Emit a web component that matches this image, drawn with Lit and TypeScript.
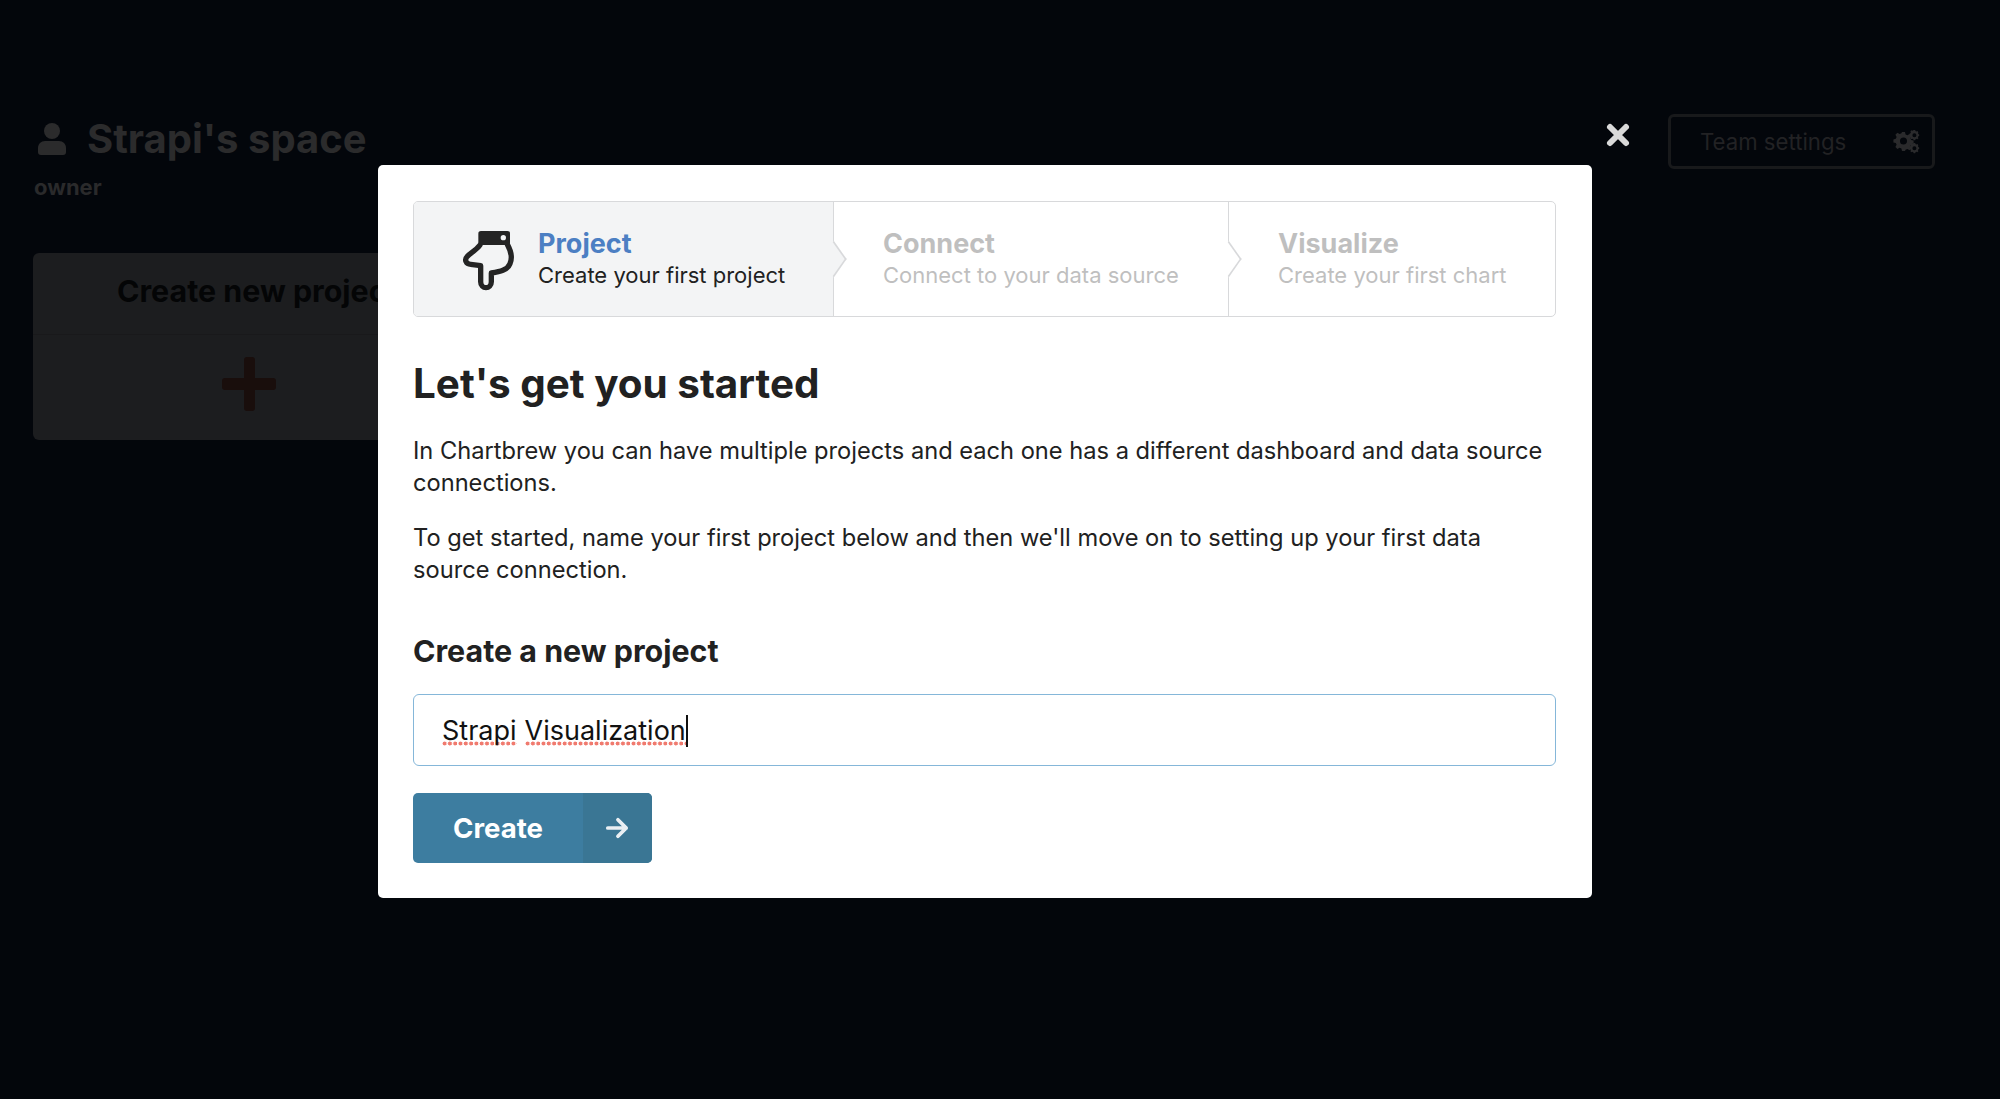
import { LitElement, html, css } from 'lit';
import { customElement } from 'lit/decorators.js';

@customElement('app-root')
export class AppRoot extends LitElement {
  static styles = css`
    :host {
      display: block;
      position: relative;
      height: 1099px;
      overflow: hidden;
      background: #03060b;
      font-family: Inter, 'Liberation Sans', sans-serif;
      font-size: 23.65px;
      line-height: 32px;
      color: #212121;
    }

    /* dimmed page behind the modal */
    .page {
      display: flex;
      justify-content: space-between;
      align-items: flex-start;
      padding: 114px 65px 0 33px;
    }
    .owner-block { display: flex; flex-direction: column; }
    .space-title {
      display: flex;
      align-items: center;
      gap: 21px;
      height: 50px;
      margin-left: 5px;
      font-size: 40px;
      font-weight: 700;
      color: #2b2b2c;
    }
    .space-title svg { width: 28px; height: 32px; fill: #2b2b2c; }
    .owner {
      margin-top: 7px;
      height: 32px;
      font-size: 22px;
      font-weight: 700;
      color: #2a2a2b;
      padding-left: 1px;
    }
    .new-card {
      width: 432px;
      height: 187px;
      margin-top: 50px;
      border-radius: 6px;
      background: #1c1d1f;
    }
    .new-card .label {
      height: 82px;
      padding: 22px 0 0 84px;
      box-sizing: border-box;
      font-size: 30.4px;
      font-weight: 700;
      white-space: nowrap;
      color: #040506;
      border-bottom: 1px solid #19191b;
    }
    .new-card svg { display: block; width: 54px; height: 54px; margin: 22px 0 0 189px; fill: #190e0c; }
    .team-btn {
      display: flex;
      align-items: center;
      justify-content: space-between;
      box-sizing: border-box;
      width: 267px;
      height: 55px;
      padding: 0 11px 0 29px;
      border: 3px solid #18191b;
      border-radius: 6px;
      font-size: 22.2px;
      color: #222224;
    }
    .team-btn svg { width: 28px; height: 24px; fill: #2a2a2c; }

    /* modal */
    .overlay {
      position: absolute;
      inset: 0;
      display: flex;
      justify-content: center;
      align-items: flex-start;
    }
    .modal {
      position: relative;
      box-sizing: border-box;
      width: 1214px;
      height: 733px;
      margin: 165px 0 0 -30px;
      padding: 36px 36px 0 35px;
      background: #fff;
      border-radius: 5px;
    }
    .close {
      position: absolute;
      top: -44px;
      right: -40px;
      width: 28px;
      height: 28px;
      fill: none;
      stroke: #d9d9d9;
      stroke-width: 6;
      stroke-linecap: round;
    }

    .steps {
      display: flex;
      height: 116px;
      box-sizing: border-box;
      border: 1.6px solid #d8d9db;
      border-radius: 5px;
    }
    .step {
      position: relative;
      display: flex;
      align-items: center;
      box-sizing: border-box;
      padding-left: 49px;
      border-right: 1.6px solid #d8d9db;
      color: #bfbfbf;
    }
    .step:nth-child(1) {
      width: 420px;
      background: #f3f4f5;
      color: #212121;
      border-radius: 4px 0 0 4px;
    }
    .step:nth-child(2) { width: 395px; }
    .step:nth-child(3) { flex: 1; border-right: 0; }
    .step .arrow {
      position: absolute;
      top: 50%;
      right: -13.500px;
      width: 25.500px;
      height: 25.500px;
      box-sizing: border-box;
      margin-top: -12.750px;
      background: #fff;
      border: solid #d8d9db;
      border-width: 2.2px 2.2px 0 0;
      transform: scaleX(0.7) rotate(45deg);
    }
    .step:nth-child(1) .arrow { background: #f3f4f5; }
    .step .hand { width: 70px; height: 70px; margin: -7px 18px 0 -13px; flex: none; }
    .step .title { font-size: 27px; font-weight: 700; line-height: 32px; }
    .step:nth-child(1) .title { color: #4c7fc3; }
    .step .desc { font-size: 22px; line-height: 30px; white-space: nowrap; }

    h2 {
      margin: 44px 0 0;
      font-size: 40.4px;
      line-height: 46px;
      font-weight: 700;
    }
    p { margin: 28px 0 0; }
    p + p { margin-top: 23px; }
    h3 {
      margin: 47px 0 0;
      font-size: 30.4px;
      line-height: 36px;
      font-weight: 700;
    }

    .input {
      display: flex;
      align-items: center;
      box-sizing: border-box;
      height: 72px;
      margin-top: 25px;
      padding: 2px 0 0 28px;
      border: 1.6px solid #85b7d9;
      border-radius: 6px;
      font-size: 27px;
      color: #111;
    }
    .misspelt {
      background: radial-gradient(circle at 2.500px 2.500px, #f07a6e 1.8px, transparent 2.2px) 0 26px / 5.3px 5px repeat-x;
    }
    .gap { width: 8px; }
    .caret { width: 2px; height: 32px; background: #111; }

    .create {
      display: inline-flex;
      align-items: stretch;
      height: 70px;
      margin-top: 27px;
      padding: 0;
      border: 0;
      border-radius: 5px;
      overflow: hidden;
      background: #3d7da0;
      color: #fff;
      font: 700 27.6px Inter, 'Liberation Sans', sans-serif;
    }
    .create .text { display: flex; align-items: center; padding: 0 40px; width: 170px; box-sizing: border-box; }
    .create .icon {
      display: flex;
      align-items: center;
      justify-content: center;
      width: 69px;
      background: #3a7694;
    }
    .create svg {
      width: 24px;
      height: 24px;
      margin-left: -2px;
      fill: none;
      stroke: #e9eff3;
      stroke-width: 4;
      stroke-linecap: round;
      stroke-linejoin: round;
    }
  `;

  render() {
    return html`
      <div class="page">
        <div class="owner-block">
          <div class="space-title">
            <svg viewBox="0 0 28 32"><circle cx="14" cy="8" r="8"/><path d="M7 18h14c4 0 7 3 7 7v4c0 2-1 3-3 3H3c-2 0-3-1-3-3v-4c0-4 3-7 7-7z"/></svg>
            Strapi's space
          </div>
          <div class="owner">owner</div>
          <div class="new-card">
            <div class="label">Create new project</div>
            <svg viewBox="0 0 54 54"><path d="M22 3c0-2 1-3 3-3h5c2 0 3 1 3 3v18h18c2 0 3 1 3 3v6c0 2-1 3-3 3H33v18c0 2-1 3-3 3h-5c-2 0-3-1-3-3V33H3c-2 0-3-1-3-3v-6c0-2 1-3 3-3h19z"/></svg>
          </div>
        </div>
        <div class="team-btn">
          Team settings
          <svg viewBox="0 0 28 24">
            <path fill-rule="evenodd" d="M10 5l3 0 .6 2.4 1.8.8 2.2-1.2 2 2-1.2 2.2.8 1.8 2.4.6v3l-2.4.6-.8 1.8 1.2 2.2-2 2-2.2-1.2-1.8.8L13 24h-3l-.6-2.4-1.8-.8-2.2 1.2-2-2 1.2-2.2-.8-1.8L1.4 15.4v-3l2.4-.6.8-1.8L3.4 7.8l2-2 2.2 1.2 1.8-.8zM11.500 10.500a3.500 3.500 0 1 0 0 7 3.500 3.500 0 0 0 0-7z" transform="translate(-1 -3) scale(1)"/>
            <path fill-rule="evenodd" d="M22 0h2l.4 1.300 1.200.6 1.200-.6 1.200 1.400-.6 1.200.5 1.200 1.100.4v1.900l-1.100.4-.5 1.200.6 1.200-1.200 1.400-1.200-.6-1.200.6-.4 1.300h-2l-.4-1.300-1.200-.6-1.200.6-1.200-1.400.6-1.200-.5-1.200-1.100-.4V4.500l1.100-.4.5-1.200-.6-1.200 1.200-1.400 1.200.6 1.200-.6zM23 4a2.500 2.500 0 1 0 0 5 2.500 2.500 0 0 0 0-5z" transform="translate(3 0) scale(.8)"/>
            <path fill-rule="evenodd" d="M22 0h2l.4 1.300 1.200.6 1.200-.6 1.200 1.400-.6 1.200.5 1.200 1.100.4v1.900l-1.100.4-.5 1.200.6 1.200-1.200 1.400-1.200-.6-1.200.6-.4 1.300h-2l-.4-1.300-1.200-.6-1.200.6-1.200-1.400.6-1.200-.5-1.200-1.100-.4V4.500l1.100-.4.5-1.200-.6-1.200 1.200-1.400 1.200.6 1.200-.6zM23 4a2.500 2.500 0 1 0 0 5 2.500 2.500 0 0 0 0-5z" transform="translate(3 13) scale(.8)"/>
          </svg>
        </div>
      </div>

      <div class="overlay">
        <div class="modal">
          <svg class="close" viewBox="0 0 28 28"><path d="M6 6l16 16M22 6L6 22"/></svg>

          <div class="steps">
            <div class="step">
              <svg class="hand" viewBox="0 0 210 210">
                <path d="M90 72C78 88 62 96 52 106C42 116 48 130 62 130L92 134V182C92 206 124 206 124 182V156C150 152 172 148 180 128C188 110 182 88 172 70" fill="none" stroke="#242424" stroke-width="16" stroke-linejoin="round" stroke-linecap="round"/>
                <path d="M93 30h79c6 0 8 3 8 8v26c0 6-3 8-8 8H93c-5 0-8-2-8-8V38c0-5 2-8 8-8z" fill="#242424"/>
                <circle cx="160" cy="50" r="8" fill="#f3f4f5"/>
              </svg>
              <div>
                <div class="title">Project</div>
                <div class="desc">Create your first project</div>
              </div>
              <span class="arrow"></span>
            </div>
            <div class="step">
              <div>
                <div class="title">Connect</div>
                <div class="desc">Connect to your data source</div>
              </div>
              <span class="arrow"></span>
            </div>
            <div class="step">
              <div>
                <div class="title">Visualize</div>
                <div class="desc">Create your first chart</div>
              </div>
            </div>
          </div>

          <h2>Let's get you started</h2>
          <p>In Chartbrew you can have multiple projects and each one has a different dashboard and data source connections.</p>
          <p>To get started, name your first project below and then we'll move on to setting up your first data source connection.</p>
          <h3>Create a new project</h3>

          <div class="input">
            <span class="misspelt">Strapi</span><span class="gap"></span><span class="misspelt">Visualization</span><span class="caret"></span>
          </div>

          <button class="create">
            <span class="text">Create</span>
            <span class="icon"><svg viewBox="0 0 26 26"><path d="M3 13h20M14 4l9 9-9 9"/></svg></span>
          </button>
        </div>
      </div>
    `;
  }
}
